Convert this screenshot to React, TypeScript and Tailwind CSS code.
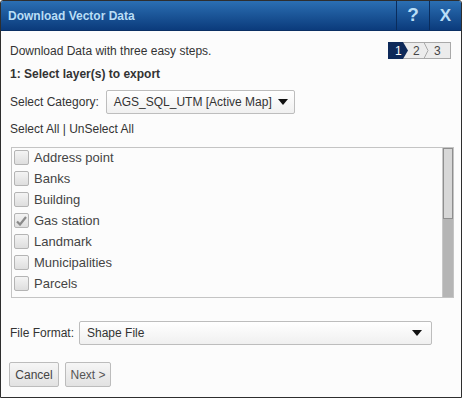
import React from "react";

const layers = [
  { name: "Address point", checked: false },
  { name: "Banks", checked: false },
  { name: "Building", checked: false },
  { name: "Gas station", checked: true },
  { name: "Landmark", checked: false },
  { name: "Municipalities", checked: false },
  { name: "Parcels", checked: false },
  { name: "", checked: false },
];

function Caret() {
  return (
    <svg width="10" height="6" viewBox="0 0 10 6">
      <path d="M0 0 L10 0 L5 6 Z" fill="#111" />
    </svg>
  );
}

function Checkbox({ checked }: { checked: boolean }) {
  return (
    <span className="w-[15px] h-[15px] rounded-[2px] border border-[#b4b4b4] bg-gradient-to-b from-[#f4f4f4] to-[#dedede] flex items-center justify-center shrink-0">
      {checked && (
        <svg width="11" height="10" viewBox="0 0 11 10">
          <path d="M1 5.5 L4 8.5 L10 1" stroke="#8a8a8a" strokeWidth="2.2" fill="none" />
        </svg>
      )}
    </span>
  );
}

function Steps() {
  return (
    <svg width="63" height="17" viewBox="0 0 63 17">
      <rect x="0.5" y="0.5" width="62" height="16" fill="#ececec" stroke="#a9a9a9" />
      <path d="M0 0 L15 0 L20 8.5 L15 17 L0 17 Z" fill="#0e2a5a" />
      <path d="M36 0.5 L40 8.5 L36 16.5" stroke="#a9a9a9" fill="none" />
      <text x="7" y="13" fill="#fff" fontSize="12" fontFamily="Liberation Sans, Arial, sans-serif">1</text>
      <text x="25" y="13" fill="#444" fontSize="12" fontFamily="Liberation Sans, Arial, sans-serif">2</text>
      <text x="46" y="13" fill="#444" fontSize="12" fontFamily="Liberation Sans, Arial, sans-serif">3</text>
    </svg>
  );
}

export default function App() {
  return (
    <div className="w-[462px] h-[398px] bg-[#fcfcfc] border border-[#2e2e2e] rounded-t-[3px] flex flex-col overflow-hidden text-[12px] text-[#333] font-['Liberation_Sans',Arial,sans-serif]">
      {/* Title bar */}
      <div className="h-[30px] shrink-0 flex items-stretch bg-gradient-to-b from-[#2b6fb3] to-[#0b3b7c] border-b border-[#0a2f63]">
        <div className="flex-1 flex items-center pl-[7px] text-[12px] font-bold text-[#b9def6]">
          Download Vector Data
        </div>
        <div className="w-[33px] flex items-center justify-center border-l border-[#0a2c5c] text-[#b9def6] text-[19px] font-bold">
          ?
        </div>
        <div className="w-[32px] flex items-center justify-center border-l border-[#0a2c5c] text-[#b9def6] text-[17px] font-bold">
          X
        </div>
      </div>

      {/* Body */}
      <div className="flex-1 flex flex-col px-[8px] pt-[13px]">
        <div className="flex items-start justify-between">
          <div className="pl-[1px] leading-[15px]">Download Data with three easy steps.</div>
          <div className="mr-[2px] -mt-[2px]">
            <Steps />
          </div>
        </div>
        <div className="pl-[1px] mt-[8px] font-bold leading-[15px]">1: Select layer(s) to export</div>

        <div className="flex items-center mt-[8px] pl-[1px]">
          <span>Select Category:</span>
          <div className="ml-[7px] w-[189px] h-[24px] border border-[#bdbdbd] rounded-[2px] bg-gradient-to-b from-[#ffffff] to-[#f0f0f0] flex items-center justify-between pl-[7px] pr-[6px] text-[#333]">
            <span>AGS_SQL_UTM [Active Map]</span>
            <Caret />
          </div>
        </div>

        <div className="pl-[1px] mt-[8px] leading-[15px]">Select All | UnSelect All</div>

        {/* Layer list */}
        <div className="mt-[10px] ml-[2px] w-[443px] h-[151px] border border-[#c4c4c4] bg-[#fcfcfc] flex overflow-hidden">
          <div className="flex-1 flex flex-col -mt-[1px] pl-[2px]">
            {layers.map((l, i) => (
              <div key={i} className="h-[21px] shrink-0 flex items-center gap-[5px]">
                <Checkbox checked={l.checked} />
                <span className="text-[13px] text-[#444]">{l.name}</span>
              </div>
            ))}
          </div>
          <div className="w-[11px] flex flex-col bg-[#b5b5b5] border-l border-[#c8c8c8]">
            <div className="h-[71px] bg-[#d7d7d7] border border-[#8e8e8e]" />
          </div>
        </div>

        <div className="flex items-center mt-[23px] pl-[1px]">
          <span>File Format:</span>
          <div className="ml-[5px] w-[353px] h-[24px] border border-[#bdbdbd] rounded-[2px] bg-gradient-to-b from-[#ffffff] to-[#f0f0f0] flex items-center justify-between pl-[7px] pr-[9px]">
            <span>Shape File</span>
            <Caret />
          </div>
        </div>

        <div className="flex gap-[6px] mt-[17px]">
          <div className="w-[50px] h-[25px] border border-[#bcbcbc] rounded-[2px] bg-gradient-to-b from-[#f6f6f6] to-[#e2e2e2] flex items-center justify-center text-[#444]">
            Cancel
          </div>
          <div className="w-[46px] h-[25px] border border-[#bcbcbc] rounded-[2px] bg-gradient-to-b from-[#f6f6f6] to-[#e2e2e2] flex items-center justify-center text-[#555]">
            Next &gt;
          </div>
        </div>
      </div>
    </div>
  );
}
